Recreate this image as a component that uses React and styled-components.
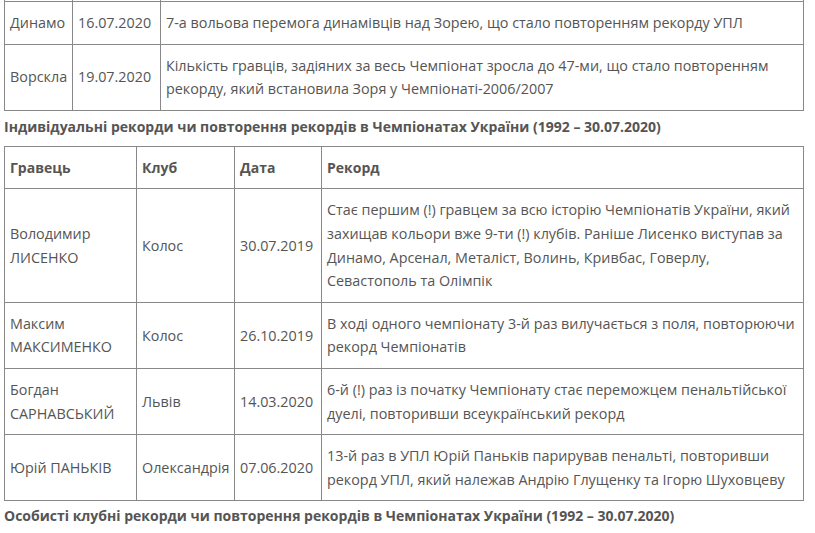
import React from "react";
import styled, { createGlobalStyle } from "styled-components";

const Global = createGlobalStyle`
  html, body { margin: 0; padding: 0; background: #fff; }
  body { font-family: "Open Sans", "Noto Sans", sans-serif; color: #555; }
`;

const Page = styled.div`
  width: 815px;
  height: 533px;
  overflow: hidden;
  padding: 0 11px 0 4px;
  box-sizing: border-box;
`;

const Table = styled.table`
  width: 800px;
  border-collapse: collapse;
  table-layout: fixed;
  font-size: 14.35px;
  line-height: 23.6px;
  color: #555;
`;

const Cell = styled.td`
  border: 1px solid #888;
  padding: 9px 5px;
  vertical-align: middle;
  text-align: left;
  font-weight: ${(p) => (p.$head ? 700 : 400)};
  font-size: ${(p) => (p.$head ? "14px" : "inherit")};
`;

const SliverCell = styled.td`
  border-left: 1px solid #888;
  border-right: 1px solid #888;
  border-bottom: 1px solid #888;
  height: 1px;
  padding: 0;
`;

const Heading = styled.p`
  margin: ${(p) => (p.$last ? "3px 0 0" : "4px 0 7px")};
  font-size: 14px;
  line-height: 24px;
  font-weight: 700;
  color: #555;
`;

const clubRecords = [
  ["Динамо", "16.07.2020", "7-а вольова перемога динамівців над Зорею, що стало повторенням рекорду УПЛ"],
  ["Ворскла", "19.07.2020", "Кількість гравців, задіяних за весь Чемпіонат зросла до 47-ми, що стало повторенням рекорду, який встановила Зоря у Чемпіонаті-2006/2007"],
];

const personal = [
  [["Володимир", "ЛИСЕНКО"], "Колос", "30.07.2019", "Стає першим (!) гравцем за всю історію Чемпіонатів України, який захищав кольори вже 9-ти (!) клубів. Раніше Лисенко виступав за Динамо, Арсенал, Металіст, Волинь, Кривбас, Говерлу, Севастополь та Олімпік"],
  [["Максим", "МАКСИМЕНКО"], "Колос", "26.10.2019", "В ході одного чемпіонату 3-й раз вилучається з поля, повторюючи рекорд Чемпіонатів"],
  [["Богдан", "САРНАВСЬКИЙ"], "Львів", "14.03.2020", "6-й (!) раз із початку Чемпіонату стає переможцем пенальтійської дуелі, повторивши всеукраїнський рекорд"],
  [["Юрій ПАНЬКІВ"], "Олександрія", "07.06.2020", "13-й раз в УПЛ Юрій Паньків парирував пенальті, повторивши рекорд УПЛ, який належав Андрію Глущенку та Ігорю Шуховцеву"],
];

export default function App() {
  return (
    <Page>
      <Global />
      <Table>
        <colgroup>
          <col style={{ width: 68 }} />
          <col style={{ width: 88 }} />
          <col />
        </colgroup>
        <tbody>
          <tr>
            <SliverCell />
            <SliverCell />
            <SliverCell />
          </tr>
          {clubRecords.map((r) => (
            <tr key={r[0]}>
              {r.map((c, i) => (
                <Cell key={i}>{c}</Cell>
              ))}
            </tr>
          ))}
        </tbody>
      </Table>
      <Heading>Індивідуальні рекорди чи повторення рекордів в Чемпіонатах України (1992 – 30.07.2020)</Heading>
      <Table>
        <colgroup>
          <col style={{ width: 132 }} />
          <col style={{ width: 98 }} />
          <col style={{ width: 87 }} />
          <col />
        </colgroup>
        <tbody>
          <tr>
            <Cell $head>Гравець</Cell>
            <Cell $head>Клуб</Cell>
            <Cell $head>Дата</Cell>
            <Cell $head>Рекорд</Cell>
          </tr>
          {personal.map((r) => (
            <tr key={r[2]}>
              <Cell>
                {r[0].map((n, i) => (
                  <React.Fragment key={i}>
                    {i > 0 && <br />}
                    {n}
                  </React.Fragment>
                ))}
              </Cell>
              <Cell>{r[1]}</Cell>
              <Cell>{r[2]}</Cell>
              <Cell>{r[3]}</Cell>
            </tr>
          ))}
        </tbody>
      </Table>
      <Heading $last>Особисті клубні рекорди чи повторення рекордів в Чемпіонатах України (1992 – 30.07.2020)</Heading>
    </Page>
  );
}
